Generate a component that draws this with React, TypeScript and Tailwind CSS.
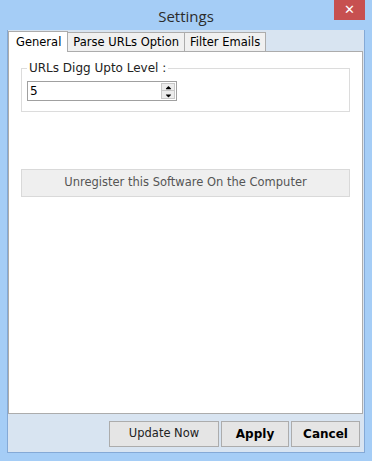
import { FaCaretUp, FaCaretDown } from "react-icons/fa"

const ui = { fontFamily: '"DejaVu Sans", Verdana, sans-serif' }

const Tab = ({ label, active }: { label: string; active?: boolean }) => (
  <div
    className={
      active
        ? "relative z-10 -mb-px flex h-[21px] items-start border border-b-0 border-[#acacac] bg-white pl-[7px] pr-[6px] pt-[2px] text-[11.5px] text-black"
        : "flex h-[19px] items-start border border-b-0 border-l-0 border-[#acacac] bg-[#f0f0f0] px-[5px] pt-[1px] text-[11.5px] text-black"
    }
  >
    {label}
  </div>
)

export default function App() {
  return (
    <div className="flex h-[461px] w-[372px] flex-col bg-[#a5cdf6]" style={ui}>
      <div className="flex h-[30px] shrink-0 items-start">
        <div className="w-[38px]" />
        <div
          className="flex-1 pt-[5px] text-center text-[15px] text-[#2b2b2b]"
          style={{ fontFamily: '"Open Sans", "Noto Sans", sans-serif' }}
        >
          Settings
        </div>
        <div className="mr-[7px] flex h-[20px] w-[31px] items-center justify-center bg-[#c75050] text-[13px] font-bold text-white">
          ✕
        </div>
      </div>

      <div className="mx-[7px] mb-[8px] flex flex-1 flex-col border border-t-0 border-[#84a9d6] bg-[#d8e4f1]">
        <div className="flex flex-col pl-0 pr-[1px] pt-[1px]">
          <div className="flex items-end">
            <Tab label="General" active />
            <Tab label="Parse URLs Option" />
            <Tab label="Filter Emails" />
          </div>
          <div className="flex h-[363px] flex-col border border-[#acacac] bg-white px-[12px] pt-[9px]">
            <fieldset className="border border-[#dcdcdc] px-[5px] pb-[10px] pt-0">
              <legend className="px-[2px] text-[12px] leading-[14px] text-[#222]">
                URLs Digg Upto Level :
              </legend>
              <div className="mt-[6px] flex h-[20px] w-[150px] items-center border border-[#a0a0a0] bg-white">
                <span className="flex-1 pl-[2px] text-[12px] text-black">5</span>
                <div className="mr-[1px] flex h-[16px] w-[14px] flex-col border border-[#c8c8c8] bg-[#ececec]">
                  <div className="flex h-[7px] items-center justify-center border-b border-[#c8c8c8]">
                    <FaCaretUp className="size-[9px] text-black" />
                  </div>
                  <div className="flex flex-1 items-center justify-center">
                    <FaCaretDown className="size-[9px] text-black" />
                  </div>
                </div>
              </div>
            </fieldset>
            <div className="mt-[57px] flex h-[28px] items-center justify-center border border-[#d9d9d9] bg-[#efefef] text-[11.5px] text-[#555]">
              Unregister this Software On the Computer
            </div>
          </div>
        </div>

        <div className="flex justify-end gap-[2px] pr-[4px] pt-[7px]">
          <button className="h-[26px] w-[110px] border border-[#acacac] bg-[#e5e5e5] text-[11.5px] text-[#222]">
            Update Now
          </button>
          <button className="h-[26px] w-[68px] border border-[#acacac] bg-[#e5e5e5] text-[12px] font-bold text-black">
            Apply
          </button>
          <button className="h-[26px] w-[69px] border border-[#acacac] bg-[#e5e5e5] text-[12px] font-bold text-black">
            Cancel
          </button>
        </div>
      </div>
    </div>
  )
}
